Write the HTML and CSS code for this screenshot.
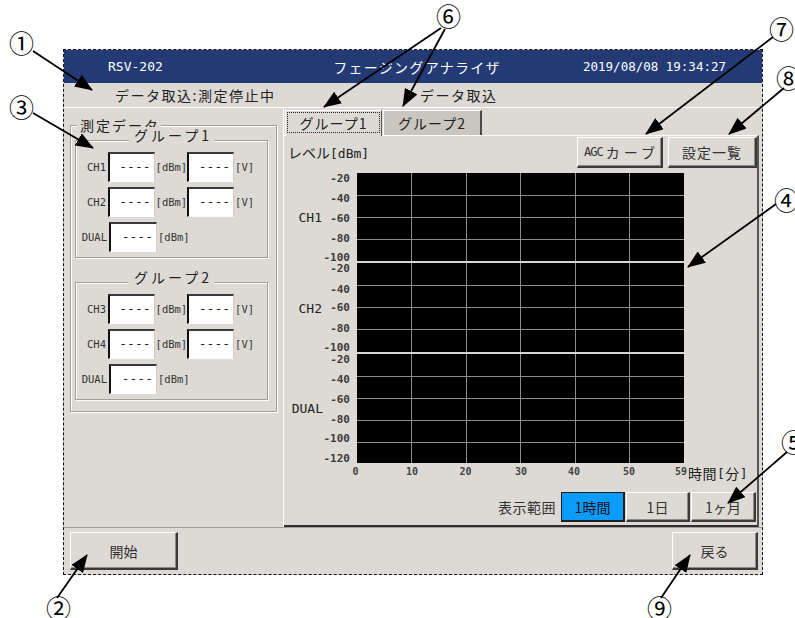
FILE: index.html
```html
<!DOCTYPE html>
<html lang="ja">
<head>
<meta charset="utf-8">
<title>フェージングアナライザ</title>
<link rel="stylesheet" href="styles.css">
</head>
<body>
<div class="screen">
  <div class="titlebar">
    <span class="t-model">RSV-202</span>
    <span class="t-name">フェージングアナライザ</span>
    <span class="t-date">2019/08/08 19:34:27</span>
  </div>
  <div class="statusbar">
    <span class="st-left">データ取込:測定停止中</span>
    <span class="st-right">データ取込</span>
  </div>
  <div class="content">
    <div class="leftpane">
      <div class="gbox outer">
        <span class="gtitle gtitle-left">測定データ</span>
        <div class="gbox inner">
          <span class="gtitle gtitle-center">グループ1</span>
          <div class="row"><span class="lbl">CH1</span><span class="field">----</span><span class="unit">[dBm]</span><span class="field">----</span><span class="unit">[V]</span></div>
          <div class="row"><span class="lbl">CH2</span><span class="field">----</span><span class="unit">[dBm]</span><span class="field">----</span><span class="unit">[V]</span></div>
          <div class="row"><span class="lbl">DUAL</span><span class="field">----</span><span class="unit">[dBm]</span></div>
        </div>
        <div class="gbox inner g2">
          <span class="gtitle gtitle-center">グループ2</span>
          <div class="row"><span class="lbl">CH3</span><span class="field">----</span><span class="unit">[dBm]</span><span class="field">----</span><span class="unit">[V]</span></div>
          <div class="row"><span class="lbl">CH4</span><span class="field">----</span><span class="unit">[dBm]</span><span class="field">----</span><span class="unit">[V]</span></div>
          <div class="row"><span class="lbl">DUAL</span><span class="field">----</span><span class="unit">[dBm]</span></div>
        </div>
      </div>
    </div>
    <div class="rightpane">
      <div class="tabs">
        <div class="tab tab-active"><span class="focus">グループ1</span></div>
        <div class="tab tab-idle">グループ2</div>
      </div>
      <div class="tabbody">
        <div class="hdr">
          <span class="lvl">レベル<span class="mono">[dBm]</span></span>
          <div class="hbtns">
            <button class="btn btn-agc"><span class="mono-s">AGC</span><span class="wide">カーブ</span></button>
            <button class="btn btn-set">設定一覧</button>
          </div>
        </div>
        <svg class="chart" width="473" height="320" viewBox="0 0 473 320">
          <rect x="73" y="5" width="327" height="290" fill="#000"/>
          <path d="M127.5 5V295M182.5 5V295M236.5 5V295M291.5 5V295M345.5 5V295" stroke="#8c8c8c" stroke-width="1" fill="none"/>
          <path d="M73 27.5H400M73 49.5H400M73 71.5H400M73 117.5H400M73 139.5H400M73 161.5H400M73 208.5H400M73 230.5H400M73 252.5H400M73 274.5H400" stroke="#8c8c8c" stroke-width="1" fill="none"/>
          <path d="M73 94H400M73 185H400" stroke="#d6d6d6" stroke-width="2" fill="none"/>
          <g class="ylab" text-anchor="end">
            <text x="66" y="10">-20</text>
            <text x="66" y="30">-40</text>
            <text x="66" y="50">-60</text>
            <text x="66" y="70">-80</text>
            <text x="66" y="89">-100</text>
            <text x="66" y="100">-20</text>
            <text x="66" y="121">-40</text>
            <text x="66" y="139">-60</text>
            <text x="66" y="160">-80</text>
            <text x="66" y="179">-100</text>
            <text x="66" y="191">-20</text>
            <text x="66" y="211">-40</text>
            <text x="66" y="231">-60</text>
            <text x="66" y="251">-80</text>
            <text x="66" y="270">-100</text>
            <text x="66" y="290">-120</text>
          </g>
          <g class="chlab" text-anchor="end">
            <text x="38" y="49">CH1</text>
            <text x="38" y="140">CH2</text>
            <text x="39" y="240">DUAL</text>
          </g>
          <g class="xlab" text-anchor="middle">
            <text x="71.5" y="303">0</text>
            <text x="128" y="303">10</text>
            <text x="181.5" y="303">20</text>
            <text x="237" y="303">30</text>
            <text x="290" y="303">40</text>
            <text x="345" y="303">50</text>
            <text x="397" y="303">59</text>
          </g>
          <text class="tlab" x="404" y="305">時間<tspan class="tmono">[</tspan>分<tspan class="tmono">]</tspan></text>
        </svg>
        <div class="range">
          <span class="range-lbl">表示範囲</span>
          <button class="btn btn-r btn-on">1時間</button>
          <button class="btn btn-r">1日</button>
          <button class="btn btn-r btn-r3">1ヶ月</button>
        </div>
      </div>
    </div>
  </div>
  <div class="bottombar">
    <button class="btn btn-start">開始</button>
    <button class="btn btn-back">戻る</button>
  </div>
</div>

<div class="callouts">
  <span class="num n1">①</span>
  <span class="num n2">②</span>
  <span class="num n3">③</span>
  <span class="num n4">④</span>
  <span class="num n5">⑤</span>
  <span class="num n6">⑥</span>
  <span class="num n7">⑦</span>
  <span class="num n8">⑧</span>
  <span class="num n9">⑨</span>
</div>

<svg class="arrows" width="795" height="618" viewBox="0 0 795 618">
  <defs>
    <marker id="ah" markerUnits="userSpaceOnUse" markerWidth="18" markerHeight="14" refX="17" refY="7" orient="auto">
      <path d="M0 0L18 7L0 14Z" fill="#000"/>
    </marker>
  </defs>
  <g stroke="#000" stroke-width="1.8" fill="none" marker-end="url(#ah)">
    <line x1="33" y1="51" x2="92" y2="90"/>
    <line x1="33" y1="113" x2="93" y2="148"/>
    <line x1="441" y1="28" x2="324" y2="107"/>
    <line x1="445" y1="29" x2="403" y2="106"/>
    <line x1="773" y1="37" x2="646" y2="134"/>
    <line x1="784" y1="88" x2="729" y2="134"/>
    <line x1="776" y1="204" x2="688" y2="267"/>
    <line x1="787" y1="452" x2="728" y2="503"/>
    <line x1="57" y1="598" x2="87" y2="555"/>
    <line x1="661" y1="598" x2="690" y2="555"/>
  </g>
</svg>
</body>
</html>
```

FILE: styles.css
```css
* { box-sizing: border-box; }
html, body { margin: 0; }
body {
  width: 795px;
  height: 618px;
  padding: 49px 0 0 63px;
  background: #fff;
  position: relative;
  overflow: hidden;
  font-family: "Noto Sans CJK JP", "Noto Sans", sans-serif;
  color: #222;
}
.screen {
  width: 700px;
  height: 526px;
  border: 1px dashed #111;
  background: #dddad5;
  display: flex;
  flex-direction: column;
}
.titlebar {
  flex: none;
  height: 33px;
  background: #233a75;
  color: #fff;
  display: grid;
  grid-template-columns: 1fr auto 1fr;
  align-items: center;
  padding: 0 36px 0 44px;
}
.t-model, .t-date {
  font-family: "DejaVu Sans Mono", monospace;
  font-size: 13px;
}
.t-date { justify-self: end; font-size: 12.5px; }
.t-name { font-size: 14px; letter-spacing: 1.3px; line-height: 16px; }
.statusbar {
  flex: none;
  height: 24px;
  display: flex;
  align-items: center;
  padding-left: 51px;
  font-size: 14px;
  line-height: 16px;
  letter-spacing: 1.5px;
  color: #222;
}
.st-left { width: 305px; }
.content {
  flex: none;
  height: 420px;
  border-top: 1px solid #fff;
  display: flex;
}
.leftpane { flex: none; width: 219px; }
.gbox {
  position: relative;
  border: 1px solid #a19e98;
  box-shadow: inset 1px 1px 0 #fff, 1px 1px 0 #fff;
}
.outer {
  margin: 17px 0 0 6px;
  width: 207px;
  height: 287px;
  padding: 14px 0 0 4px;
}
.inner {
  width: 193px;
  height: 118px;
  padding: 11px 0 0 0;
  display: flex;
  flex-direction: column;
  gap: 5px;
}
.g2 { margin-top: 24px; }
.gtitle {
  position: absolute;
  background: #dddad5;
  font-size: 14px;
  line-height: 16px;
  color: #222;
  white-space: nowrap;
}
.gtitle-left { top: -9px; left: 6px; padding: 0 1px 0 3px; letter-spacing: 2px; }
.gtitle-center { top: -14px; left: 50%; transform: translateX(-50%); padding: 0 3px 0 6px; letter-spacing: 3px; }
.row { display: flex; align-items: center; height: 30px; }
.lbl {
  width: 31px;
  margin-right: 2px;
  text-align: right;
  font-family: "DejaVu Sans Mono", monospace;
  font-size: 10.5px;
  color: #333;
}
.unit {
  margin-left: 1px;
  width: 33px;
  font-family: "DejaVu Sans Mono", monospace;
  font-size: 10.5px;
  color: #333;
}
.field {
  width: 48px;
  height: 30px;
  background: #fff;
  border-style: solid;
  border-width: 2px 1px 1px 2px;
  border-color: #3a3a3a #cfcbc5 #fff #111;
  font-family: "DejaVu Sans Mono", monospace;
  font-size: 13px;
  line-height: 26px;
  text-align: right;
  padding-right: 3px;
  color: #222;
}

.rightpane {
  flex: none;
  width: 476px;
  border-left: 1px solid #fff;
  display: flex;
  flex-direction: column;
}
.tabs {
  flex: none;
  height: 27px;
  display: flex;
  align-items: flex-end;
  padding-left: 1px;
}
.tab {
  font-size: 14px;
  line-height: 16px;
  letter-spacing: 1px;
  color: #222;
  display: flex;
  align-items: center;
  justify-content: center;
}
.tab-active {
  position: relative;
  z-index: 1;
  width: 97px;
  height: 26px;
  margin-bottom: -1px;
  background: #dddad5;
  border-top: 1px solid #fff;
  border-left: 1px solid #fff;
  border-right: 1px solid #555;
  padding: 1px 1px 3px 1px;
}
.focus {
  width: 100%;
  height: 100%;
  border: 1px dotted #222;
  display: flex;
  align-items: center;
  justify-content: center;
}
.tab-idle {
  width: 99px;
  height: 25px;
  margin-left: 1px;
  background: #c9c6bf;
  border-top: 1px solid #fff;
  border-left: 1px solid #fff;
  border-right: 2px solid #4a4a4a;
}
.tabbody {
  flex: none;
  height: 392px;
  border-top: 1px solid #fff;
  border-right: 2px solid #555;
  border-bottom: 2px solid #2e2e2e;
  display: flex;
  flex-direction: column;
}
.hdr {
  flex: none;
  margin-top: 1px;
  height: 31px;
  display: flex;
  align-items: center;
  justify-content: space-between;
  padding-left: 4px;
}
.lvl { font-size: 14px; line-height: 16px; color: #222; padding-top: 1px; }
.mono { font-family: "DejaVu Sans Mono", monospace; font-size: 13px; }
.hbtns { display: flex; gap: 5px; height: 31px; }
.btn {
  background: #dddad5;
  border-style: solid;
  border-width: 1px 2px 2px 1px;
  border-color: #fff #3a3a3a #3a3a3a #fff;
  box-shadow: inset -1px -1px 0 #8e8b86;
  font-family: "Noto Sans CJK JP", sans-serif;
  font-size: 14px;
  line-height: 16px;
  color: #333;
  padding: 0;
  margin: 0;
  display: flex;
  align-items: center;
  justify-content: center;
}
.btn-agc { width: 86px; height: 31px; }
.btn-set { width: 89px; height: 31px; letter-spacing: 1px; }
.mono-s { font-family: "DejaVu Sans Mono", monospace; font-size: 12px; letter-spacing: -1px; margin-right: 3px; }
.wide { letter-spacing: 4px; margin-right: -4px; }
.chart { display: block; flex: none; }
.ylab text {
  font-family: "DejaVu Sans Mono", monospace;
  font-size: 11px;
  font-weight: bold;
  fill: #3c3c3c;
  dominant-baseline: central;
}
.chlab text {
  font-family: "DejaVu Sans Mono", monospace;
  font-size: 13px;
  fill: #222;
  dominant-baseline: central;
}
.xlab text {
  font-family: "DejaVu Sans Mono", monospace;
  font-size: 10px;
  font-weight: bold;
  fill: #444;
  dominant-baseline: central;
}
.tlab {
  font-family: "Noto Sans CJK JP", sans-serif;
  font-size: 14px;
  fill: #222;
  dominant-baseline: central;
  letter-spacing: 0.5px;
}
.tmono { font-family: "DejaVu Sans Mono", monospace; font-size: 13px; }
.range {
  flex: none;
  margin-top: 4px;
  height: 30px;
  display: flex;
  justify-content: flex-end;
  align-items: center;
  gap: 1px;
  padding-right: 1px;
}
.range-lbl { font-size: 14px; line-height: 16px; color: #333; margin-right: 4px; letter-spacing: 0.5px; }
.btn-r { width: 64px; height: 30px; }
.btn-r3 { width: 65px; }
.btn-on {
  background: #0a9cff;
  border-color: #1d1d1d;
  box-shadow: none;
  color: #111;
}
.bottombar {
  flex: 1;
  border-top: 1px solid #a19e98;
  display: flex;
  justify-content: space-between;
  align-items: flex-start;
  padding: 4px 4px 0 6px;
}
.btn-start { width: 108px; height: 38px; }
.btn-back { width: 86px; height: 38px; }

.callouts { position: absolute; left: 0; top: 0; }
.num {
  position: absolute;
  font-family: "Noto Sans CJK JP", sans-serif;
  font-size: 25px;
  line-height: 25px;
  color: #000;
}
.n1 { left: 9px; top: 30px; }
.n3 { left: 9px; top: 94px; }
.n6 { left: 436px; top: 3px; }
.n7 { left: 769px; top: 16px; }
.n8 { left: 776px; top: 65px; }
.n4 { left: 774px; top: 187px; }
.n5 { left: 781px; top: 429px; }
.n2 { left: 46px; top: 595px; }
.n9 { left: 647px; top: 595px; }
.arrows { position: absolute; left: 0; top: 0; pointer-events: none; }
```
